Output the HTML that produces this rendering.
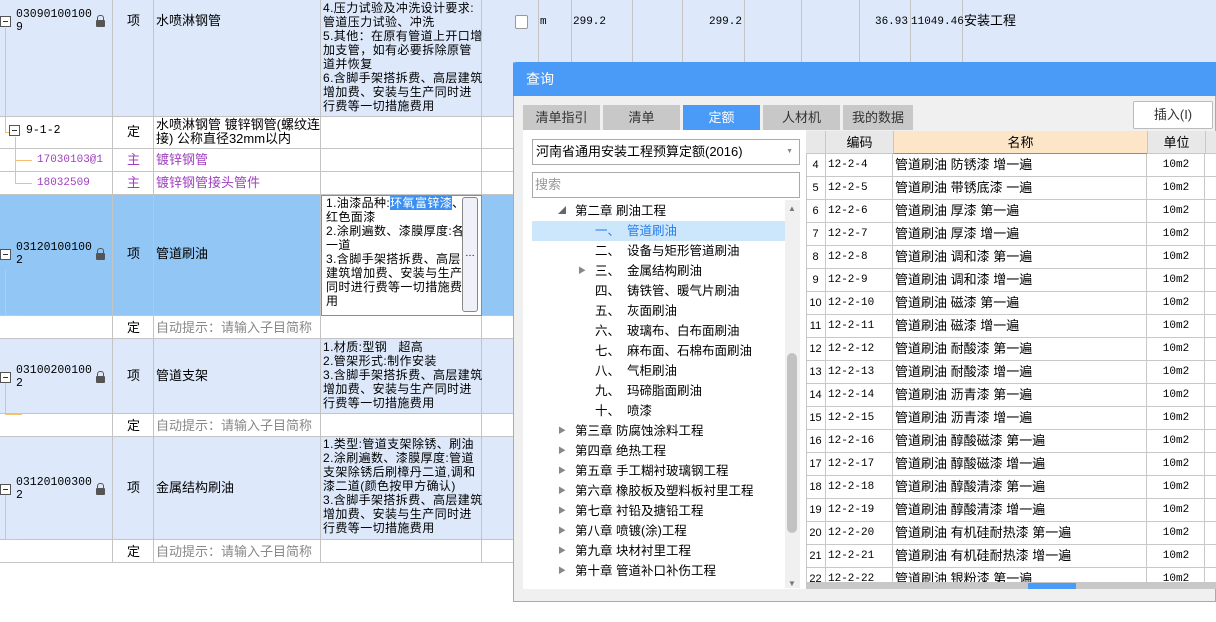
<!DOCTYPE html><html><head><meta charset="utf-8"><style>
*{box-sizing:border-box;margin:0;padding:0}
body{width:1216px;height:622px;overflow:hidden;background:#fff;font-family:"Liberation Sans","Noto Sans CJK SC",sans-serif;font-size:12px;color:#000;position:relative}
.a{position:absolute;white-space:nowrap;line-height:16px}
.r{position:absolute;left:0;width:1216px;border-bottom:1px solid #c4c4c4}
.v{position:absolute;top:0;width:1px;background:#c4c4c4}
.t{position:absolute;line-height:13px;font-size:12px;white-space:normal}
.f{position:absolute;left:323px;width:160px;line-height:14px;font-size:12px;letter-spacing:0.4px;white-space:normal}
.mono{font-family:"Liberation Mono","Noto Sans CJK SC",monospace;font-size:11px}
.lock{position:absolute;left:96px;width:9px;height:7px;background:#555;border-radius:1px}
.lock:before{content:"";position:absolute;left:1px;top:-5px;width:5px;height:6px;border:1px solid #555;border-bottom:none;border-radius:3px 3px 0 0}
.mi{position:absolute;left:0;width:11px;height:11px;border:1px solid #555;background:#fff}
.mi:after{content:"";position:absolute;left:2px;top:4px;width:5px;height:1px;background:#333}
.ol{position:absolute;border:0 solid #f5c070}
.tab{position:absolute;top:105px;height:25px;background:#c8c8c8;color:#333;font-size:13px;text-align:center;line-height:25px}
.tr{position:absolute;height:20px;line-height:20px;font-size:12.5px;white-space:nowrap}
.ar{position:absolute;font-size:8px;color:#888;line-height:20px}
.gr{position:absolute;left:806px;width:410px;height:23px;border-bottom:1px solid #c8c8c8;background:#fff;font-size:12px;line-height:22px}
.gr span{position:absolute;top:0}
</style></head><body>
<div class="r" style="top:0;height:117px;background:#dde9fb"></div>
<div class="r" style="top:117px;height:32px"></div>
<div class="r" style="top:149px;height:23px"></div>
<div class="r" style="top:172px;height:23px"></div>
<div class="r" style="top:195px;height:121px;background:#92c7f5"></div>
<div class="r" style="top:316px;height:23px"></div>
<div class="r" style="top:339px;height:75px;background:#dde9fb"></div>
<div class="r" style="top:414px;height:23px"></div>
<div class="r" style="top:437px;height:103px;background:#dde9fb"></div>
<div class="r" style="top:540px;height:23px"></div>
<div class="v" style="left:112px;height:562px"></div>
<div class="v" style="left:153px;height:562px"></div>
<div class="v" style="left:320px;height:562px"></div>
<div class="v" style="left:481px;height:562px"></div>
<div class="v" style="left:538px;height:62px"></div><div class="v" style="left:571px;height:62px"></div><div class="v" style="left:632px;height:62px"></div><div class="v" style="left:682px;height:62px"></div><div class="v" style="left:744px;height:62px"></div><div class="v" style="left:801px;height:62px"></div><div class="v" style="left:859px;height:62px"></div><div class="v" style="left:910px;height:62px"></div><div class="v" style="left:962px;height:62px"></div>
<div class="a" style="left:515px;top:15px;width:13px;height:14px;border:1px solid #999;border-radius:2px;background:#fff"></div>
<div class="a mono" style="left:540px;top:14px">m</div>
<div class="a mono" style="left:573px;top:14px">299.2</div>
<div class="a mono" style="left:700px;top:14px;width:42px;text-align:right">299.2</div>
<div class="a mono" style="left:860px;top:14px;width:48px;text-align:right">36.93</div>
<div class="a mono" style="left:911px;top:14px;width:49px;text-align:right">11049.46</div>
<div class="a" style="left:964px;top:13px;font-size:13px">安装工程</div>
<div class="ol" style="left:5px;top:28px;height:105px;border-left-width:1px;border-bottom-width:1px;width:5px"></div>
<div class="ol" style="left:15px;top:137px;height:47px;border-left-width:1px;border-bottom-width:1px;width:17px"></div>
<div class="ol" style="left:15px;top:149px;height:12px;border-bottom-width:1px;width:17px"></div>
<div class="ol" style="left:5px;top:260px;height:56px;border-left-width:1px;border-bottom-width:1px;width:17px;top:270px;height:46px"></div>
<div class="ol" style="left:5px;top:383px;height:32px;border-left-width:1px;border-bottom-width:1px;width:17px"></div>
<div class="ol" style="left:5px;top:495px;height:45px;border-left-width:1px;border-bottom-width:1px;width:17px"></div>
<div class="mi" style="top:16px"></div><div class="t mono" style="left:16px;top:8px;font-size:11.5px">03090100100<br>9</div><div class="lock" style="top:20px"></div>
<div class="a" style="left:127px;top:13px;font-size:13px">项</div><div class="a" style="left:156px;top:13px;font-size:13px">水喷淋钢管</div>
<div class="f" style="top:1px">4.压力试验及冲洗设计要求:管道压力试验、冲洗<br>5.其他：在原有管道上开口增加支管，如有必要拆除原管道并恢复<br>6.含脚手架搭拆费、高层建筑增加费、安装与生产同时进行费等一切措施费用</div>
<div class="mi" style="left:9px;top:125px"></div><div class="a mono" style="left:26px;top:123px;font-size:11.5px">9-1-2</div>
<div class="a" style="left:127px;top:124px;font-size:13px">定</div><div class="t" style="left:156px;top:118px;width:165px;line-height:14px;font-size:13px">水喷淋钢管 镀锌钢管(螺纹连接) 公称直径32mm以内</div>
<div class="a mono" style="left:37px;top:152px;color:#a040c0">17030103@1</div><div class="a" style="left:127px;top:152px;color:#a040c0;font-size:13px">主</div><div class="a" style="left:156px;top:152px;color:#a040c0;font-size:13px">镀锌钢管</div>
<div class="a mono" style="left:37px;top:175px;color:#a040c0">18032509</div><div class="a" style="left:127px;top:175px;color:#a040c0;font-size:13px">主</div><div class="a" style="left:156px;top:175px;color:#a040c0;font-size:13px">镀锌钢管接头管件</div>
<div class="mi" style="top:249px"></div><div class="t mono" style="left:16px;top:241px;font-size:11.5px">03120100100<br>2</div><div class="lock" style="top:253px"></div>
<div class="a" style="left:127px;top:246px;font-size:13px">项</div><div class="a" style="left:156px;top:246px;font-size:13px">管道刷油</div>
<div class="a" style="left:321px;top:195px;width:161px;height:121px;background:#fff;border:1px solid #4a9af5"></div>
<div class="f" style="left:326px;top:196px;width:140px"><span>1.油漆品种:</span><span style="background:#3b8ff0;color:#fff">环氧富锌漆</span>、红色面漆<br>2.涂刷遍数、漆膜厚度:各一道<br>3.含脚手架搭拆费、高层建筑增加费、安装与生产同时进行费等一切措施费用</div>
<div class="a" style="left:462px;top:197px;width:16px;height:115px;border:1px solid #888;border-radius:3px;background:#eef1f8;text-align:center;line-height:112px;font-size:10px">…</div>
<div class="a" style="left:127px;top:320px;font-size:13px">定</div><div class="a" style="left:156px;top:320px;color:#888;font-size:13px">自动提示：请输入子目简称</div>
<div class="mi" style="top:372px"></div><div class="t mono" style="left:16px;top:364px;font-size:11.5px">03100200100<br>2</div><div class="lock" style="top:376px"></div>
<div class="a" style="left:127px;top:368px;font-size:13px">项</div><div class="a" style="left:156px;top:368px;font-size:13px">管道支架</div>
<div class="f" style="top:340px">1.材质:型钢 &nbsp; 超高<br>2.管架形式:制作安装<br>3.含脚手架搭拆费、高层建筑增加费、安装与生产同时进行费等一切措施费用</div>
<div class="a" style="left:127px;top:418px;font-size:13px">定</div><div class="a" style="left:156px;top:418px;color:#888;font-size:13px">自动提示：请输入子目简称</div>
<div class="mi" style="top:484px"></div><div class="t mono" style="left:16px;top:476px;font-size:11.5px">03120100300<br>2</div><div class="lock" style="top:488px"></div>
<div class="a" style="left:127px;top:480px;font-size:13px">项</div><div class="a" style="left:156px;top:480px;font-size:13px">金属结构刷油</div>
<div class="f" style="top:437px">1.类型:管道支架除锈、刷油<br>2.涂刷遍数、漆膜厚度:管道支架除锈后刷樟丹二道,调和漆二道(颜色按甲方确认)<br>3.含脚手架搭拆费、高层建筑增加费、安装与生产同时进行费等一切措施费用</div>
<div class="a" style="left:127px;top:544px;font-size:13px">定</div><div class="a" style="left:156px;top:544px;color:#888;font-size:13px">自动提示：请输入子目简称</div>
<!-- dialog -->
<div class="a" style="left:513px;top:62px;width:703px;height:540px;background:#f0f0f0;border:1px solid #aaa;border-top:none"></div>
<div class="a" style="left:513px;top:62px;width:703px;height:34px;background:#4a9af7;border-radius:3px 0 0 0;color:#fff;font-size:14px;line-height:34px;padding-left:13px">查询</div>
<div class="tab" style="left:523px;width:77px">清单指引</div>
<div class="tab" style="left:603px;width:77px">清单</div>
<div class="tab" style="left:683px;width:77px;background:#4a9af7;color:#fff">定额</div>
<div class="tab" style="left:763px;width:77px">人材机</div>
<div class="tab" style="left:843px;width:70px">我的数据</div>
<div class="a" style="left:1133px;top:101px;width:80px;height:28px;background:#fff;border:1px solid #bbb;border-radius:2px;text-align:center;line-height:26px;font-size:13px;color:#333">插入(I)</div>
<div class="a" style="left:523px;top:130px;width:283px;height:459px;background:#fff"></div>
<div class="a" style="left:532px;top:139px;width:268px;height:26px;border:1px solid #aaa;background:#fff;line-height:24px;padding-left:3px;font-size:13px">河南省通用安装工程预算定额(2016)<span style="position:absolute;right:6px;top:0;font-size:7px;color:#888">▼</span></div>
<div class="a" style="left:532px;top:172px;width:268px;height:26px;border:1px solid #aaa;background:#fff;line-height:24px;padding-left:2px;color:#999;font-size:13px">搜索</div>
<div class="a" style="left:532px;top:221px;width:253px;height:20px;background:#cce6fc"></div>
<div class="ar" style="left:558px;top:201px;color:#666">◢</div><div class="tr" style="left:575px;top:201px">第二章 刷油工程</div>
<div class="tr" style="left:595px;top:221px;color:#2a7ee8">一、&nbsp; 管道刷油</div>
<div class="tr" style="left:595px;top:241px">二、&nbsp; 设备与矩形管道刷油</div>
<div class="ar" style="left:578px;top:261px">▶</div><div class="tr" style="left:595px;top:261px">三、&nbsp; 金属结构刷油</div>
<div class="tr" style="left:595px;top:281px">四、&nbsp; 铸铁管、暖气片刷油</div>
<div class="tr" style="left:595px;top:301px">五、&nbsp; 灰面刷油</div>
<div class="tr" style="left:595px;top:321px">六、&nbsp; 玻璃布、白布面刷油</div>
<div class="tr" style="left:595px;top:341px">七、&nbsp; 麻布面、石棉布面刷油</div>
<div class="tr" style="left:595px;top:361px">八、&nbsp; 气柜刷油</div>
<div class="tr" style="left:595px;top:381px">九、&nbsp; 玛碲脂面刷油</div>
<div class="tr" style="left:595px;top:401px">十、&nbsp; 喷漆</div>
<div class="ar" style="left:558px;top:421px">▶</div><div class="tr" style="left:575px;top:421px">第三章 防腐蚀涂料工程</div>
<div class="ar" style="left:558px;top:441px">▶</div><div class="tr" style="left:575px;top:441px">第四章 绝热工程</div>
<div class="ar" style="left:558px;top:461px">▶</div><div class="tr" style="left:575px;top:461px">第五章 手工糊衬玻璃钢工程</div>
<div class="ar" style="left:558px;top:481px">▶</div><div class="tr" style="left:575px;top:481px">第六章 橡胶板及塑料板衬里工程</div>
<div class="ar" style="left:558px;top:501px">▶</div><div class="tr" style="left:575px;top:501px">第七章 衬铅及搪铅工程</div>
<div class="ar" style="left:558px;top:521px">▶</div><div class="tr" style="left:575px;top:521px">第八章 喷镀(涂)工程</div>
<div class="ar" style="left:558px;top:541px">▶</div><div class="tr" style="left:575px;top:541px">第九章 块材衬里工程</div>
<div class="ar" style="left:558px;top:561px">▶</div><div class="tr" style="left:575px;top:561px">第十章 管道补口补伤工程</div>
<div class="a" style="left:523px;top:582px;width:283px;height:7px;background:#fff"></div>
<div class="a" style="left:785px;top:200px;width:15px;height:388px;background:#f0f0f0"></div>
<div class="a" style="left:787px;top:353px;width:10px;height:180px;background:#c2c2c2;border-radius:5px"></div>
<div class="a" style="left:788px;top:201px;font-size:8px;color:#777">▲</div>
<div class="a" style="left:788px;top:576px;font-size:8px;color:#777">▼</div>
<div class="a" style="left:806px;top:131px;width:410px;height:454px;background:#fff;overflow:hidden">
<div class="a" style="left:0;top:0;width:410px;height:23px;background:#e8e8e8;border-bottom:1px solid #c8c8c8;font-size:13px;line-height:23px">
<span class="a" style="left:19px;width:68px;text-align:center;border-left:1px solid #c8c8c8;height:23px;line-height:23px">编码</span>
<span class="a" style="left:87px;width:254px;text-align:center;background:#fde6c8;border-left:1px solid #c8c8c8;height:23px;line-height:23px;border-bottom:1px solid #4a9af7">名称</span>
<span class="a" style="left:341px;width:58px;text-align:center;border-left:1px solid #c8c8c8;height:23px;line-height:23px">单位</span>
<span class="a" style="left:399px;width:11px;border-left:1px solid #c8c8c8;height:23px"></span></div>
</div>
<div id="g"></div>
<div class="a" style="left:806px;top:154px;width:1px;height:430px;background:#c8c8c8"></div>
<div class="a" style="left:825px;top:154px;width:1px;height:430px;background:#c8c8c8"></div>
<div class="a" style="left:892px;top:154px;width:1px;height:430px;background:#c8c8c8"></div>
<div class="a" style="left:1146px;top:154px;width:1px;height:430px;background:#c8c8c8"></div>
<div class="a" style="left:1204px;top:154px;width:1px;height:430px;background:#c8c8c8"></div>
<div class="a" style="left:806px;top:583px;width:410px;height:6px;background:#c8c8c8"></div>
<div class="a" style="left:1028px;top:583px;width:48px;height:6px;background:#4a9af7"></div>
<script>
var n=[["4","12-2-4","管道刷油 防锈漆 增一遍"],["5","12-2-5","管道刷油 带锈底漆 一遍"],["6","12-2-6","管道刷油 厚漆 第一遍"],["7","12-2-7","管道刷油 厚漆 增一遍"],["8","12-2-8","管道刷油 调和漆 第一遍"],["9","12-2-9","管道刷油 调和漆 增一遍"],["10","12-2-10","管道刷油 磁漆 第一遍"],["11","12-2-11","管道刷油 磁漆 增一遍"],["12","12-2-12","管道刷油 耐酸漆 第一遍"],["13","12-2-13","管道刷油 耐酸漆 增一遍"],["14","12-2-14","管道刷油 沥青漆 第一遍"],["15","12-2-15","管道刷油 沥青漆 增一遍"],["16","12-2-16","管道刷油 醇酸磁漆 第一遍"],["17","12-2-17","管道刷油 醇酸磁漆 增一遍"],["18","12-2-18","管道刷油 醇酸清漆 第一遍"],["19","12-2-19","管道刷油 醇酸清漆 增一遍"],["20","12-2-20","管道刷油 有机硅耐热漆 第一遍"],["21","12-2-21","管道刷油 有机硅耐热漆 增一遍"],["22","12-2-22","管道刷油 银粉漆 第一遍"]];
var h="";n.forEach(function(r,i){var t=154+i*23;var hh=Math.min(23,583-t);h+='<div class="gr" style="top:'+t+'px;height:'+hh+'px;overflow:hidden"><span style="left:0;width:19px;text-align:center;font-size:11px">'+r[0]+'</span><span class="mono" style="left:22px">'+r[1]+'</span><span style="left:89px;font-size:13px">'+r[2]+'</span><span class="mono" style="left:341px;width:58px;text-align:center">10m2</span></div>';});
document.getElementById("g").innerHTML=h;
</script>
</body></html>
